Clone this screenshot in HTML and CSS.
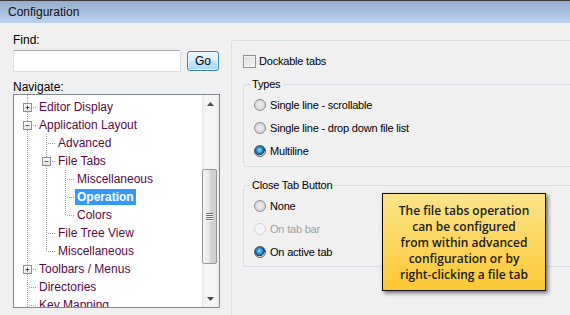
FILE: index.html
```html
<!DOCTYPE html>
<html>
<head>
<meta charset="utf-8">
<link rel="stylesheet" href="styles.css">
</head>
<body>
<div class="window">
  <div class="titlebar">Configuration</div>
  <div class="main">
    <div class="left">
      <div class="label find-label">Find:</div>
      <div class="find-row">
        <div class="textbox"></div>
        <div class="btn">Go</div>
      </div>
      <div class="label nav-label">Navigate:</div>
      <div class="tree">
        <div class="tree-items">
          <div class="row"><span class="c t"><span class="exp"><svg width="9" height="9" viewBox="0 0 9 9"><path d="M2 4.5h5M4.5 2v5" stroke="#1f2a44" stroke-width="1"/></svg></span></span><span class="txt">Editor Display</span></div>
          <div class="row"><span class="c t"><span class="exp"><svg width="9" height="9" viewBox="0 0 9 9"><path d="M2 4.5h5" stroke="#1f2a44" stroke-width="1"/></svg></span></span><span class="txt">Application Layout</span></div>
          <div class="row"><span class="g v"></span><span class="c t"></span><span class="txt">Advanced</span></div>
          <div class="row"><span class="g v"></span><span class="c t"><span class="exp"><svg width="9" height="9" viewBox="0 0 9 9"><path d="M2 4.5h5" stroke="#1f2a44" stroke-width="1"/></svg></span></span><span class="txt">File Tabs</span></div>
          <div class="row"><span class="g v"></span><span class="g v"></span><span class="c t"></span><span class="txt">Miscellaneous</span></div>
          <div class="row"><span class="g v"></span><span class="g v"></span><span class="c t"></span><span class="txt sel">Operation</span></div>
          <div class="row"><span class="g v"></span><span class="g v"></span><span class="c l"></span><span class="txt">Colors</span></div>
          <div class="row"><span class="g v"></span><span class="c t"></span><span class="txt">File Tree View</span></div>
          <div class="row"><span class="g v"></span><span class="c l"></span><span class="txt">Miscellaneous</span></div>
          <div class="row"><span class="c t"><span class="exp"><svg width="9" height="9" viewBox="0 0 9 9"><path d="M2 4.5h5M4.5 2v5" stroke="#1f2a44" stroke-width="1"/></svg></span></span><span class="txt">Toolbars / Menus</span></div>
          <div class="row"><span class="c t"></span><span class="txt">Directories</span></div>
          <div class="row"><span class="c t"></span><span class="txt">Key Mapping</span></div>
        </div>
        <div class="vscroll">
          <div class="arrow"><svg width="7" height="4" viewBox="0 0 7 4"><path d="M0 4L3.5 0L7 4Z" fill="#4a4a4a"/></svg></div>
          <div class="track"><div class="thumb"><span class="grip"></span><span class="grip"></span><span class="grip"></span><span class="grip"></span></div></div>
          <div class="arrow"><svg width="7" height="4" viewBox="0 0 7 4"><path d="M0 0L7 0L3.5 4Z" fill="#4a4a4a"/></svg></div>
        </div>
      </div>
    </div>
    <div class="panel">
      <div class="check-row"><span class="checkbox"></span><span>Dockable tabs</span></div>
      <fieldset class="group types">
        <legend>Types</legend>
        <div class="opt"><span class="radio"></span><span>Single line - scrollable</span></div>
        <div class="opt"><span class="radio"></span><span>Single line - drop down file list</span></div>
        <div class="opt"><span class="radio on"></span><span>Multiline</span></div>
      </fieldset>
      <fieldset class="group close">
        <legend>Close Tab Button</legend>
        <div class="opt"><span class="radio"></span><span>None</span></div>
        <div class="opt disabled"><span class="radio"></span><span>On tab bar</span></div>
        <div class="opt"><span class="radio on"></span><span>On active tab</span></div>
      </fieldset>
    </div>
  </div>
  <div class="callout">The file tabs operation<br>can be configured<br>from within advanced<br>configuration or by<br>right-clicking a file tab</div>
</div>
</body>
</html>
```

FILE: styles.css
```css
* { box-sizing: border-box; }
html, body { margin: 0; padding: 0; }
body {
  width: 570px;
  height: 315px;
  overflow: hidden;
  background: #f0f0f0;
  font-family: "Liberation Sans", Arial, sans-serif;
  font-size: 12px;
  color: #000;
}
.window {
  position: relative;
  width: 570px;
  height: 315px;
  overflow: hidden;
  background: #f0f0f0;
}
.titlebar {
  height: 23px;
  border-top: 1px solid #3a3a3a;
  background: linear-gradient(to bottom, #93aecd, #bcd3ee);
  padding-left: 8px;
  line-height: 23px;
  font-size: 12px;
  color: #111;
}
.main {
  display: flex;
  align-items: flex-start;
}
.left {
  width: 231px;
  flex: none;
  padding: 0 11px 0 13px;
}
.label {
  line-height: 14px;
  height: 14px;
}
.find-label { margin-top: 10px; }
.find-row {
  display: flex;
  align-items: center;
  gap: 6px;
  margin-top: 3px;
}
.textbox {
  width: 168px;
  height: 22px;
  background: #fff;
  border: 1px solid #dcdfe4;
  border-top-color: #abadb3;
  border-radius: 2px;
}
.btn {
  width: 32px;
  height: 20px;
  border: 1px solid #3c7fb1;
  border-radius: 3px;
  background: linear-gradient(to bottom, #eaf6fd 0%, #d9f0fc 50%, #bee6fd 51%, #a7d9f5 100%);
  box-shadow: inset 0 0 0 1px rgba(255,255,255,0.7);
  text-align: center;
  line-height: 18px;
  font-size: 12px;
}
.nav-label { margin-top: 9px; height: 13px; line-height: 13px; }
.tree {
  width: 207px;
  height: 214px;
  border: 1px solid #828790;
  background: #fff;
  display: flex;
  overflow: hidden;
}
.tree-items {
  flex: 1;
  padding: 3px 0 0 4px;
  overflow: hidden;
  background: repeating-linear-gradient(to bottom, #a0a0a0 0 1px, transparent 1px 2px) 13px 0 / 1px 3px no-repeat;
}
.row {
  display: flex;
  height: 18px;
  align-items: center;
  white-space: nowrap;
}
.g, .c {
  width: 19px;
  height: 18px;
  flex: none;
  display: flex;
  align-items: center;
}
.g.v {
  background: repeating-linear-gradient(to bottom, #a0a0a0 0 1px, transparent 1px 2px) 9px 0 / 1px 100% no-repeat;
}
.c.t {
  background:
    repeating-linear-gradient(to right, #a0a0a0 0 1px, transparent 1px 2px) 11px 9px / 8px 1px no-repeat,
    repeating-linear-gradient(to bottom, #a0a0a0 0 1px, transparent 1px 2px) 9px 0 / 1px 100% no-repeat;
}
.c.l {
  background:
    repeating-linear-gradient(to right, #a0a0a0 0 1px, transparent 1px 2px) 11px 9px / 8px 1px no-repeat,
    repeating-linear-gradient(to bottom, #a0a0a0 0 1px, transparent 1px 2px) 9px 0 / 1px 10px no-repeat;
}
.exp {
  width: 9px;
  height: 9px;
  margin-left: 5px;
  border: 1px solid #919191;
  background: linear-gradient(to bottom, #fff, #e4e4e4);
  display: flex;
  align-items: center;
  justify-content: center;
}
.exp svg { display: block; width: 7px; height: 7px; }
.txt {
  padding: 0 2px;
  line-height: 16px;
  height: 16px;
  color: #5a0a44;
  font-size: 12px;
}
.txt.sel {
  background: #3399ff;
  color: #fff;
  font-weight: bold;
}
.vscroll {
  width: 17px;
  flex: none;
  display: flex;
  flex-direction: column;
  background: linear-gradient(to right, #e8e8e8, #f5f5f5 20%, #f5f5f5 80%, #e8e8e8);
}
.arrow {
  height: 17px;
  display: flex;
  align-items: center;
  justify-content: center;
}
.arrow svg { display: block; }
.track {
  flex: 1;
  padding-top: 57px;
}
.thumb {
  width: 15px;
  height: 95px;
  border: 1px solid #979797;
  border-radius: 2px;
  background: linear-gradient(to right, #f4f4f4, #e6e6e6 50%, #d4d4d4 51%, #cfcfcf);
  display: flex;
  flex-direction: column;
  align-items: center;
  justify-content: center;
  gap: 1px;
}
.grip {
  width: 7px;
  height: 1px;
  background: #6b6b6b;
  box-shadow: 0 1px 0 #fff;
}
.panel {
  margin-top: 17px;
  width: 360px;
  height: 300px;
  flex: none;
  border: 1px solid #d5dfe5;
  border-radius: 3px 0 0 0;
  padding: 13px 0 0 11px;
  font-size: 11px;
  letter-spacing: -0.2px;
}
.check-row {
  display: flex;
  align-items: center;
  gap: 3px;
  height: 14px;
  line-height: 14px;
}
.checkbox {
  width: 13px;
  height: 13px;
  border: 1px solid #8f8f8f;
  background: linear-gradient(135deg, #dcdcdc, #f6f6f6);
  box-shadow: inset 0 0 0 1px #f4f4f4;
}
.group {
  margin: 9px 0 0 0;
  padding: 2px 0 4px 10px;
  border: 1px solid #d5dfe5;
  border-radius: 3px;
  min-width: 0;
}
.group legend {
  padding: 0 2px;
  margin-left: -4px;
  line-height: 14px;
  font-size: 11px;
}
.group.close { margin-top: 11px; padding-bottom: 3px; }
.opt {
  display: flex;
  align-items: center;
  gap: 4px;
  height: 23px;
}
.radio {
  width: 12px;
  height: 12px;
  border-radius: 50%;
  border: 1px solid #8e8f8f;
  background: radial-gradient(circle at 50% 50%, #f0f0f0 0, #e0e0e0 45%, #c9c9c9 100%);
  flex: none;
}
.radio.on {
  background:
    radial-gradient(circle at 45% 40%, #8fe0ff 0, #2a8fd0 35%, #0c3f6e 62%, transparent 66%),
    radial-gradient(circle, #f4f4f4 0, #e4e4e4 60%, #cfcfcf 100%);
  border-color: #5a5a5a;
}
.opt.disabled { color: #a0a0a0; }
.opt.disabled .radio {
  border-color: #d2d2d2;
  background: #f4f4f4;
}
.callout {
  position: absolute;
  left: 382px;
  top: 193px;
  width: 164px;
  height: 98px;
  border: 1.5px solid #111;
  background: linear-gradient(to bottom, #fde48a, #fcc835);
  box-shadow: 2px 2px 4px rgba(0,0,0,0.55);
  font-family: "Open Sans", sans-serif;
  font-weight: 600;
  font-size: 12px;
  line-height: 16px;
  color: #1a1a1a;
  text-align: center;
  padding-top: 9px;
}
```
